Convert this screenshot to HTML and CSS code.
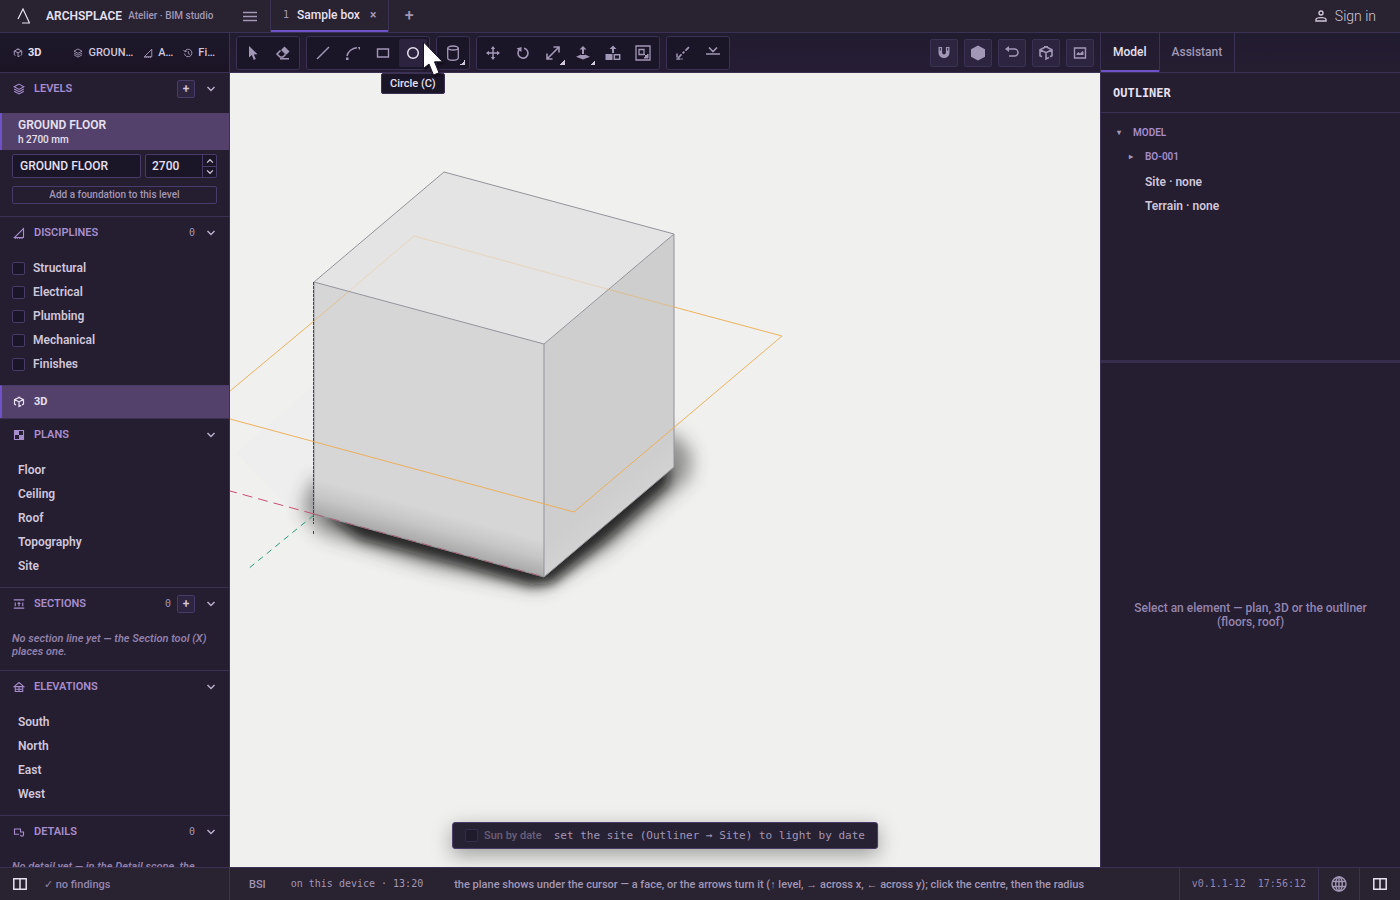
FILE: index.html
```html
<!DOCTYPE html>
<html lang="en">
<head>
<meta charset="utf-8">
<title>Archsplace</title>
<link rel="stylesheet" href="styles.css">
</head>
<body>
<svg class="defs" aria-hidden="true">
  <symbol id="cube" viewBox="0 0 16 16"><path d="M8 1.8 14 4.8v6l-2 1M8 1.8 2 4.8v6l2 1M2 4.8l6 2.8 6-2.8M8 7.6V14l3-1.5M6 1.8h4" fill="none" stroke="currentColor" stroke-width="1.6"/></symbol>
  <symbol id="layers" viewBox="0 0 16 16"><path d="M8 1.5 14.5 5 8 8.500 1.500 5zM1.500 8 8 11.500 14.500 8M1.500 11 8 14.500 14.500 11" fill="none" stroke="currentColor" stroke-width="1.400"/></symbol>
  <symbol id="triangle" viewBox="0 0 16 16"><path d="M14 2v12H2z" fill="none" stroke="currentColor" stroke-width="1.500"/><path d="M2 14.500h12" stroke="currentColor" stroke-width="2" stroke-dasharray="2 1"/></symbol>
  <symbol id="history" viewBox="0 0 16 16"><path d="M3 5a6 6 0 1 1-.7 4M1 3.500 3 6l3-1M8.500 5v4l2.500 1" fill="none" stroke="currentColor" stroke-width="1.500"/></symbol>
  <symbol id="chevron" viewBox="0 0 12 12"><path d="m2.500 4 3.500 3.500L9.500 4" fill="none" stroke="currentColor" stroke-width="1.500"/></symbol>
  <symbol id="panel" viewBox="0 0 16 14"><path d="M1.800 1.800h12.400v10.400H1.800zM8 2v10" fill="none" stroke="currentColor" stroke-width="1.500"/></symbol>
</svg>
<div class="app">
  <header class="topbar">
    <div class="brand">
      <svg class="logo" viewBox="0 0 14 16"><path d="M1 11 6 1l6.500 14M5 15h8" fill="none" stroke="currentColor" stroke-width="1.200"/></svg>
      <strong>ARCHSPLACE</strong><span>Atelier · BIM studio</span>
    </div>
    <button class="menu" aria-label="Menu"><svg width="14" height="11" viewBox="0 0 14 11"><path d="M0 1.500h14M0 5.500h14M0 9.500h14" stroke="currentColor" stroke-width="1.500"/></svg></button>
    <div class="doc-tab"><span class="num">1</span><span>Sample box</span><button aria-label="Close">×</button></div>
    <button class="new-tab" aria-label="New tab">+</button>
    <a class="signin" href="#"><svg width="12" height="12" viewBox="0 0 12 12"><circle cx="6" cy="3" r="2" fill="none" stroke="currentColor" stroke-width="1.400"/><path d="M1 11V9.500C1 7 11 7 11 9.500V11z" fill="none" stroke="currentColor" stroke-width="1.400"/></svg>Sign in</a>
  </header>

  <nav class="crumbs">
    <button class="active"><svg class="i10"><use href="#cube"/></svg>3D</button>
    <button class="level"><svg class="i10"><use href="#layers"/></svg>GROUN…</button>
    <button><svg class="i10"><use href="#triangle"/></svg>A…</button>
    <button><svg class="i10"><use href="#history"/></svg>Fi…</button>
  </nav>

  <div class="toolbar">
    <div class="group">
      <button aria-label="Select"><svg viewBox="0 0 16 16"><path d="M4 1v11.500l2.800-2.500 2 5 2-.9-2-4.700 3.700-.2z" fill="currentColor"/></svg></button>
      <button aria-label="Erase"><svg viewBox="0 0 16 16"><path d="m9.500 1.500 5 5-3.500 3.500-5-5z" fill="currentColor"/><path d="m5.500 5.500-3.500 3.500 3 3h3l2.500-2.500M5 13.800h9" fill="none" stroke="currentColor" stroke-width="1.600"/></svg></button>
    </div>
    <div class="group">
      <button aria-label="Line"><svg viewBox="0 0 16 16"><path d="M2 14 14 2" stroke="currentColor" stroke-width="1.400"/></svg></button>
      <button aria-label="Arc"><svg viewBox="0 0 16 16"><path d="M2 11C3 6.500 7 3 12 2.800" fill="none" stroke="currentColor" stroke-width="1.500"/><path d="M1 12.500h2.500V15H1zM13 2h2v2.500h-1z" fill="currentColor"/></svg></button>
      <button aria-label="Rectangle"><svg viewBox="0 0 16 16"><path d="M2.500 4h11v8h-11z" fill="none" stroke="currentColor" stroke-width="1.400"/></svg></button>
      <button class="on" aria-label="Circle"><svg viewBox="0 0 16 16"><circle cx="8" cy="8" r="5.300" fill="none" stroke="currentColor" stroke-width="1.500"/></svg></button>
    </div>
    <div class="group">
      <button class="more" aria-label="Volume"><svg viewBox="0 0 16 16"><ellipse cx="8" cy="3" rx="5.300" ry="2" fill="none" stroke="currentColor" stroke-width="1.300"/><path d="M2.700 3v10c0 3 10.600 3 10.600 0V3" fill="none" stroke="currentColor" stroke-width="1.300"/></svg></button>
    </div>
    <div class="group">
      <button aria-label="Move"><svg viewBox="0 0 16 16"><path d="M8 2v12M2 8h12" stroke="currentColor" stroke-width="1.500"/><path d="M8 1 5.800 4h4.400zM8 15l-2.200-3h4.400zM1 8l3-2.200v4.400zM15 8l-3-2.200v4.400z" fill="currentColor"/></svg></button>
      <button aria-label="Rotate"><svg viewBox="0 0 16 16"><path d="M4.500 4.500A5 5 0 1 0 9 3.200" fill="none" stroke="currentColor" stroke-width="1.600"/><path d="M1.500 3.500 6.500 2v5z" fill="currentColor"/></svg></button>
      <button class="more" aria-label="Scale"><svg viewBox="0 0 16 16"><path d="M2 14 14 2M8.500 2H14v5.500M2 8.500V14h5.500" fill="none" stroke="currentColor" stroke-width="1.600"/></svg></button>
      <button class="more" aria-label="Push or pull"><svg viewBox="0 0 16 16"><path d="M8 1 4.500 4.500H7V9h2V4.500h2.500zM1 11.800 6 9.600V10h4v-.4l5 2.200L8 14.500z" fill="currentColor"/></svg></button>
      <button aria-label="Extract"><svg viewBox="0 0 16 16"><path d="M8 .5 4.500 4H7v4h2V4h2.500zM.5 9h7v6h-7z" fill="currentColor"/><path d="M9.300 9.800h5.400v4.400H9.300z" fill="none" stroke="currentColor" stroke-width="1.500"/></svg></button>
      <button aria-label="Offset"><svg viewBox="0 0 16 16"><path d="M1 1h14v14H1zM4 4.500h5v5H4z" fill="none" stroke="currentColor" stroke-width="1.300"/><path d="m9 9 3 3M13 9v4H9z" fill="currentColor" stroke="currentColor"/></svg></button>
    </div>
    <div class="group">
      <button aria-label="Measure"><svg viewBox="0 0 16 16"><path d="M3 13 14 2" stroke="currentColor" stroke-width="1.700" stroke-dasharray="5 1.500 2.500 1.500"/><path d="M2 8.500V14h5.500" fill="none" stroke="currentColor" stroke-width="1.500" stroke-dasharray="4 1"/></svg></button>
      <button aria-label="Elevation mark"><svg viewBox="0 0 16 16"><path d="m4 2.500 4 4 4-4M1 9h14" fill="none" stroke="currentColor" stroke-width="1.600"/></svg></button>
    </div>
    <div class="view-tools">
      <button aria-label="Snap"><svg viewBox="0 0 16 16"><path d="M4.300 2v5.500a3.700 3.700 0 0 0 7.400 0V2" fill="none" stroke="currentColor" stroke-width="3.600"/><path d="M3.800 3h1v2.500h-1zM11.200 3h1v2.500h-1z" fill="#2b2340"/></svg></button>
      <button aria-label="Shading"><svg viewBox="0 0 16 16"><path d="m8 .5 7 3.800v7.400l-7 3.800-7-3.800V4.300z" fill="currentColor"/></svg></button>
      <button aria-label="Undo"><svg viewBox="0 0 16 16"><path d="M3 4h7.500a3.500 3.500 0 0 1 0 7H5" fill="none" stroke="currentColor" stroke-width="1.500"/><path d="M1 4 5 1v6z" fill="currentColor"/></svg></button>
      <button aria-label="View cube"><svg><use href="#cube"/></svg></button>
      <button aria-label="Picture"><svg viewBox="0 0 16 16"><path d="M2.500 3h11v10h-11z" fill="none" stroke="currentColor" stroke-width="1.400"/><path d="M4.500 10V9l2-2 1.500 1.500L10.500 6l1 1v3z" fill="currentColor"/></svg></button>
    </div>
    <div class="tooltip" role="tooltip">Circle (C)</div>
    <svg class="pointer" viewBox="0 0 22 36"><path d="M1.500 1v26.500l5.500-4.500 4.500 11 5.500-2.200-4.500-11H20.500z" fill="#fff" stroke="#1b1428" stroke-width="1"/></svg>
  </div>

  <nav class="tabs">
    <button class="active">Model</button><button>Assistant</button>
  </nav>

  <aside class="sidebar">
    <section>
      <h2><svg class="i14"><use href="#layers"/></svg>LEVELS<span class="fill"></span><button class="add" aria-label="Add level">+</button><button class="fold" aria-label="Fold levels"><svg><use href="#chevron"/></svg></button></h2>
      <button class="level-item"><b>GROUND FLOOR</b><small>h 2700 mm</small></button>
      <div class="level-form">
        <input class="name" type="text" value="GROUND FLOOR" aria-label="Level name">
        <div class="stepper">
          <input type="number" value="2700" aria-label="Level height">
          <div class="steps"><button aria-label="Increase"><svg class="up"><use href="#chevron"/></svg></button><button aria-label="Decrease"><svg><use href="#chevron"/></svg></button></div>
        </div>
        <button class="foundation">Add a foundation to this level</button>
      </div>
    </section>
    <section>
      <h2><svg class="i14"><use href="#triangle"/></svg>DISCIPLINES<span class="fill"></span><span class="count">0</span><button class="fold" aria-label="Fold disciplines"><svg><use href="#chevron"/></svg></button></h2>
      <div class="list">
        <label><input type="checkbox">Structural</label>
        <label><input type="checkbox">Electrical</label>
        <label><input type="checkbox">Plumbing</label>
        <label><input type="checkbox">Mechanical</label>
        <label><input type="checkbox">Finishes</label>
      </div>
    </section>
    <button class="scope"><svg class="i14"><use href="#cube"/></svg>3D</button>
    <section>
      <h2><svg class="i14" viewBox="0 0 16 16"><path d="M2 2h12v12H2z" fill="none" stroke="currentColor" stroke-width="1.500"/><path d="M2 2h6v6h6v6H8V8H2z" fill="currentColor"/></svg>PLANS<span class="fill"></span><button class="fold" aria-label="Fold plans"><svg><use href="#chevron"/></svg></button></h2>
      <div class="list"><a href="#">Floor</a><a href="#">Ceiling</a><a href="#">Roof</a><a href="#">Topography</a><a href="#">Site</a></div>
    </section>
    <section>
      <h2><svg class="i14" viewBox="0 0 16 16"><path d="M1 2.500h14M1 13.500h14M3 6v5M8 7v4M13 6v5" stroke="currentColor" stroke-width="1.500"/><path d="M8 5 5.500 8h5z" fill="currentColor"/></svg>SECTIONS<span class="fill"></span><span class="count">0</span><button class="add" aria-label="Add section">+</button><button class="fold" aria-label="Fold sections"><svg><use href="#chevron"/></svg></button></h2>
      <p>No section line yet — the Section tool (X) places one.</p>
    </section>
    <section>
      <h2><svg class="i14" viewBox="0 0 16 16"><path d="M1.500 7.500 8 2l6.500 5.500zM3 7.500V14h10V7.500M8 8v6M3 11h10" fill="none" stroke="currentColor" stroke-width="1.400"/></svg>ELEVATIONS<span class="fill"></span><button class="fold" aria-label="Fold elevations"><svg><use href="#chevron"/></svg></button></h2>
      <div class="list"><a href="#">South</a><a href="#">North</a><a href="#">East</a><a href="#">West</a></div>
    </section>
    <section>
      <h2><svg class="i14" viewBox="0 0 16 16"><path d="M10 5.500V4H2v7h6M10 5.500V8h4v3.500a2 2 0 0 1-4 0" fill="none" stroke="currentColor" stroke-width="1.500"/></svg>DETAILS<span class="fill"></span><span class="count">0</span><button class="fold" aria-label="Fold details"><svg><use href="#chevron"/></svg></button></h2>
      <p>No detail yet — in the Detail scope, the</p>
    </section>
  </aside>

  <main class="viewport">
    <svg class="scene" role="img" aria-label="Sample box in 3D">
      <defs>
        <filter id="soft" x="-30%" y="-30%" width="160%" height="160%"><feGaussianBlur stdDeviation="9"/></filter>
        <filter id="tight" x="-30%" y="-30%" width="160%" height="160%"><feGaussianBlur stdDeviation="6"/></filter>
        <linearGradient id="front" gradientUnits="userSpaceOnUse" x1="199" y1="472" x2="208" y2="439"><stop offset="0" stop-color="#aaaaaa"/><stop offset=".5" stop-color="#c6c6c6"/><stop offset="1" stop-color="#d6d6d6"/></linearGradient>
        <linearGradient id="side" gradientUnits="userSpaceOnUse" x1="379" y1="449" x2="364" y2="431"><stop offset="0" stop-color="#d2d2d2"/><stop offset="1" stop-color="#cecece"/></linearGradient>
      </defs>
      <path d="M6 380 84 312V442L56 432z" fill="#eeeeee"/>
      <path d="M82 408 72 436 90 460 200 494 310 516 380 474 460 404 462 380 444 360z" fill="#333" opacity=".5" filter="url(#soft)"/>
      <path d="M96 442 130 466 230 492 300 512 322 510 380 464 438 412 440 392z" fill="#101010" opacity=".8" filter="url(#tight)"/>
      <path d="M84 209 314 271V504L84 441z" fill="url(#front)"/>
      <path d="M314 271 444 161V394L314 504z" fill="url(#side)"/>
      <path d="M214 99 444 161 314 271 84 209z" fill="#e4e4e4"/>
      <path d="M214 99 444 161V394L314 504 84 441V209zM84 209l230 62 130-110M314 271v233" fill="none" stroke="#93939b" stroke-width="1"/>
      <g fill="none" stroke="#ecac4f" stroke-width="1">
        <path d="M0 318 84 248M444 234l108 29L344 439 0 346" opacity=".9"/>
        <path d="M84 248 118 219M444 234 377 216" opacity=".5"/>
        <path d="M118 219 184 163 377 216" opacity=".25"/>
      </g>
      <path d="M83.500 209V451M83.500 458v3" stroke="#47415c" stroke-width="1" stroke-dasharray="3 1"/>
      <path d="M84 441 0 418" stroke="#c94f72" stroke-dasharray="10 6"/>
      <path d="M84 441l230 63" stroke="#a9576c" stroke-dasharray="10 6" opacity=".8"/>
      <path d="M84 442 18 496" stroke="#269b80" stroke-dasharray="6 5"/>
    </svg>
    <div class="sunbar"><label><input type="checkbox" disabled>Sun by date</label><span>set the site (Outliner → Site) to light by date</span></div>
  </main>

  <aside class="inspector">
    <div class="outliner">
      <h2>OUTLINER</h2>
      <ul>
        <li class="node"><i>▾</i>MODEL</li>
        <li class="node deep"><i>▸</i>BO-001</li>
        <li class="leaf">Site · none</li>
        <li class="leaf">Terrain · none</li>
      </ul>
    </div>
    <div class="empty">Select an element — plan, 3D or the outliner (floors, roof)</div>
  </aside>

  <footer class="status">
    <div class="findings"><button aria-label="Toggle left panel"><svg width="16" height="14"><use href="#panel"/></svg></button><span>✓ no findings</span></div>
    <span class="bsi">BSI</span>
    <span class="saved">on this device · 13:20</span>
    <span class="hint">the plane shows under the cursor — a face, or the arrows turn it (↑ level, → across x, ← across y); click the centre, then the radius</span>
    <div class="version"><span>v0.1.1-12</span><span>17:56:12</span></div>
    <button class="cell" aria-label="Language"><svg width="16" height="16" viewBox="0 0 16 16"><g fill="none" stroke="currentColor" stroke-width="1.400"><circle cx="8" cy="8" r="7"/><ellipse cx="8" cy="8" rx="3.300" ry="7"/><path d="M8 1v14M1.500 5.500h13M1.500 10.500h13"/></g></svg></button>
    <button class="cell bright" aria-label="Toggle right panel"><svg width="16" height="14"><use href="#panel"/></svg></button>
  </footer>
</div>
</body>
</html>
```
FILE: styles.css
```css
:root {
  --bar: #292231;
  --panel: #251d30;
  --deep: #1b1528;
  --line: #3b3153;
  --edge: #483b68;
  --accent: #7052c8;
  --sel: #54416b;
  --text: #e6e0f0;
  --soft: #cfc6da;
  --muted: #a297b5;
  --head: #a78dcc;
  --mono: "DejaVu Sans Mono", monospace;
}
* { box-sizing: border-box; }
body {
  margin: 0;
  background: var(--panel);
  color: var(--soft);
  font: 500 12px/16px Roboto, sans-serif;
}
button {
  margin: 0;
  padding: 0;
  border: 0;
  background: none;
  color: inherit;
  font: inherit;
}
input { margin: 0; font: inherit; color: inherit; }
a { color: inherit; text-decoration: none; }
h2, p, ul { margin: 0; padding: 0; }
svg { display: block; flex: none; }
.defs { position: absolute; width: 0; height: 0; }
.i10 { width: 10px; height: 10px; }
.i14 { width: 12px; height: 12px; }

.app {
  display: grid;
  grid-template: 33px 40px minmax(0, 1fr) 33px / 230px minmax(0, 1fr) 300px;
  height: 100vh;
}

.topbar {
  grid-column: 1 / -1;
  display: flex;
  align-items: stretch;
  background: var(--bar);
  border-bottom: 1px solid var(--line);
}
.brand {
  display: flex;
  align-items: center;
  width: 230px;
  padding-left: 17px;
  font-size: 10px;
  color: var(--muted);
}
.brand strong { margin: 0 6px 0 15px; font-size: 12px; font-weight: 600; color: var(--text); }
.logo { width: 14px; height: 16px; color: var(--text); }
.menu { width: 40px; display: grid; place-items: center; color: var(--muted); }
.doc-tab {
  display: flex;
  align-items: center;
  padding: 0 12px;
  padding-bottom: 2px;
  color: var(--text);
  border: solid var(--line);
  border-width: 0 1px;
  box-shadow: inset 0 -2px var(--accent);
}
.num { margin-right: 8px; font: 10px/16px var(--mono); color: var(--muted); }
.doc-tab button { margin-left: 10px; color: var(--muted); font-weight: 700; }
.new-tab { width: 40px; padding-bottom: 1px; font-size: 16px; color: var(--muted); }
.signin {
  display: flex;
  align-items: center;
  gap: 8px;
  margin-left: auto;
  padding-right: 24px;
  font-size: 14px;
  font-weight: 300;
  color: var(--soft);
}

.crumbs {
  display: flex;
  align-items: center;
  padding-left: 13px;
  background: linear-gradient(#1e182c, #1a1425);
  border: solid var(--line);
  border-width: 0 1px 1px 0;
  font-size: 11px;
}
.crumbs button { display: flex; align-items: center; gap: 5px; margin-right: 10px; }
.crumbs .active { flex: 1; color: var(--text); font-weight: 700; }
.crumbs svg { color: var(--muted); }
.crumbs button:last-child { margin-right: 14px; }

.toolbar {
  position: relative;
  display: flex;
  align-items: flex-start;
  gap: 6px;
  padding: 3px 6px 0;
  background: linear-gradient(#221c30, #261d34);
  border-bottom: 1px solid var(--line);
  color: var(--muted);
}
.group {
  display: flex;
  gap: 2px;
  padding: 2px;
  background: var(--deep);
  border: 1px solid var(--line);
  border-radius: 3px;
}
.toolbar button {
  position: relative;
  display: grid;
  place-items: center;
  width: 28px;
  height: 28px;
  border-radius: 2px;
}
.toolbar button svg { width: 16px; height: 16px; }
.toolbar .on { background: #2c243e; color: var(--text); }
.more::after {
  content: "";
  position: absolute;
  right: 2px;
  bottom: 2px;
  width: 5px;
  height: 5px;
  background: linear-gradient(135deg, transparent 50%, var(--soft) 50%);
}
.view-tools { display: flex; gap: 6px; margin-left: auto; padding-top: 3px; }
.view-tools button { background: #2d2440; border: 1px solid var(--line); }
.tooltip {
  position: absolute;
  z-index: 3;
  left: 151px;
  top: 40px;
  padding: 2px 8px;
  background: var(--deep);
  border: 1px solid var(--line);
  border-radius: 2px;
  color: var(--text);
  font-size: 11px;
  line-height: 15px;
}
.pointer {
  position: absolute;
  z-index: 4;
  left: 192px;
  top: 8px;
  width: 22px;
  height: 36px;
  filter: drop-shadow(1px 2px 1px rgb(0 0 0 / 50%));
}

.tabs {
  display: flex;
  background: linear-gradient(#221c30, #251d30);
  border: solid var(--line);
  border-width: 0 0 1px 1px;
}
.tabs button { padding: 0 12px 2px; color: var(--muted); border-right: 1px solid var(--line); }
.tabs .active { color: var(--text); box-shadow: inset 0 -2px var(--accent); }

.sidebar { overflow: hidden; border-right: 1px solid var(--line); }
.sidebar section + section, .scope + section { border-top: 1px solid var(--line); }
.sidebar h2 {
  display: flex;
  align-items: center;
  gap: 6px;
  height: 31px;
  padding: 0 12px 0 13px;
  color: var(--head);
  font-size: 11px;
  font-weight: 600;
}
.sidebar h2 > .i14 { margin-right: 3px; }
.fill { flex: 1; }
.count { font: 10px/16px var(--mono); color: var(--muted); }
.add {
  width: 18px;
  height: 18px;
  background: #2d2440;
  border: 1px solid var(--edge);
  border-radius: 2px;
  color: var(--soft);
  font-size: 12px;
  line-height: 14px;
}
.fold { margin-left: 4px; color: #b9aecb; }
.fold svg { width: 12px; height: 12px; }
.level-item {
  display: block;
  width: 100%;
  margin-top: 9px;
  padding: 5px 16px 4px;
  background: var(--sel);
  border-left: 2px solid var(--accent);
  text-align: left;
  line-height: 14px;
  color: var(--text);
}
.level-item b, .level-item small { display: block; }
.level-item b { font-weight: 600; }
.level-item small { font-size: 10px; line-height: 15px; margin-bottom: -1px; }
.level-form {
  display: grid;
  grid-template-columns: 1fr 72px;
  gap: 8px 4px;
  padding: 4px 12px 12px;
  color: var(--text);
}
.name, .stepper {
  width: 100%;
  height: 24px;
  background: var(--deep);
  border: 1px solid var(--edge);
  border-radius: 2px;
}
.name { padding: 0 7px; }
.stepper { display: flex; }
.stepper input {
  flex: 1;
  min-width: 0;
  padding: 0 0 0 6px;
  background: none;
  border: 0;
  appearance: textfield;
}
.stepper input::-webkit-inner-spin-button { appearance: none; margin: 0; }
.steps { display: grid; grid-template-rows: 1fr 1fr; width: 14px; border-left: 1px solid var(--edge); color: var(--soft); }
.steps button { display: grid; place-items: center; min-height: 0; }
.steps button + button { border-top: 1px solid var(--edge); }
.steps svg { width: 12px; height: 10px; }
.steps .up { rotate: 180deg; }
.foundation {
  grid-column: 1 / -1;
  height: 18px;
  border: 1px solid var(--edge);
  border-radius: 2px;
  color: var(--muted);
  font-size: 10px;
  line-height: 14px;
}
.list { display: grid; grid-auto-rows: 24px; align-items: center; padding: 8px 0 9px; font-weight: 600; line-height: 17px; }
.list a { padding: 1px 0 0 18px; }
label { display: flex; align-items: center; gap: 8px; }
.list label { padding-left: 12px; }
input[type="checkbox"] {
  appearance: none;
  width: 13px;
  height: 13px;
  background: var(--deep);
  border: 1px solid var(--edge);
  border-radius: 2px;
}
.scope {
  display: flex;
  align-items: center;
  gap: 9px;
  width: 100%;
  height: 33px;
  padding-left: 11px;
  background: var(--sel);
  border-top: 1px solid var(--edge);
  border-left: 2px solid var(--accent);
  color: var(--text);
  font-size: 11px;
  font-weight: 700;
}
.sidebar p {
  padding: 13px 12px 12px;
  color: #8f80aa;
  font-size: 11px;
  font-style: italic;
  font-weight: 600;
  line-height: 13px;
}

.viewport { position: relative; overflow: hidden; background: #f0f0ee; }
.scene { width: 100%; height: 100%; }
.sunbar {
  position: absolute;
  left: 50%;
  bottom: 18px;
  translate: -50% 0;
  display: flex;
  align-items: center;
  gap: 12px;
  height: 27px;
  padding: 0 12px;
  background: #272134;
  border: 1px solid var(--edge);
  border-radius: 3px;
  box-shadow: 0 6px 20px rgb(0 0 0 / 35%);
  color: var(--muted);
  font-size: 11px;
  white-space: nowrap;
}
.sunbar label { gap: 6px; color: #696078; }
.sunbar input { opacity: .5; }
.sunbar span { font: 11px/16px var(--mono); }

.inspector {
  display: grid;
  grid-template-rows: 290px 1fr;
  border-left: 1px solid var(--line);
}
.outliner { border-bottom: 3px solid #372d4c; }
.outliner h2 {
  height: 40px;
  padding-left: 12px;
  border-bottom: 1px solid var(--line);
  color: var(--text);
  font: 700 12px/41px var(--mono);
}
.outliner ul { padding-top: 8px; list-style: none; line-height: 24px; }
.node { display: flex; padding-left: 16px; color: var(--head); font-size: 10px; font-weight: 600; }
.node i { width: 16px; font-size: 8px; font-style: normal; color: var(--muted); }
.deep { padding-left: 28px; }
.leaf { padding-left: 44px; font-weight: 600; }
.node + .leaf { padding-top: 1px; }
.empty {
  display: grid;
  place-items: center;
  padding: 0 24px;
  color: #9485ae;
  line-height: 14px;
  text-align: center;
}

.status {
  grid-column: 1 / -1;
  display: flex;
  align-items: center;
  background: var(--bar);
  border-top: 1px solid var(--line);
  color: var(--muted);
  font-size: 11px;
  line-height: 17px;
}
.status > .findings {
  display: flex;
  align-items: center;
  gap: 16px;
  align-self: stretch;
  width: 230px;
  padding-left: 12px;
  border-right: 1px solid var(--line);
}
.findings button, .bright { color: var(--text); }
.findings span { color: #9485ae; }
.bsi { margin: 0 25px 0 19px; }
.saved { font: 10px/16px var(--mono); }
.hint { flex: 1; min-width: 0; padding-left: 31px; overflow: hidden; white-space: nowrap; }
.version {
  display: flex;
  align-items: center;
  align-self: stretch;
  gap: 12px;
  padding: 0 12px;
  border-left: 1px solid var(--line);
  font: 10px/16px var(--mono);
  color: #9485ae;
}
.cell {
  display: grid;
  place-items: center;
  align-self: stretch;
  width: 41px;
  border-left: 1px solid var(--line);
}
```
